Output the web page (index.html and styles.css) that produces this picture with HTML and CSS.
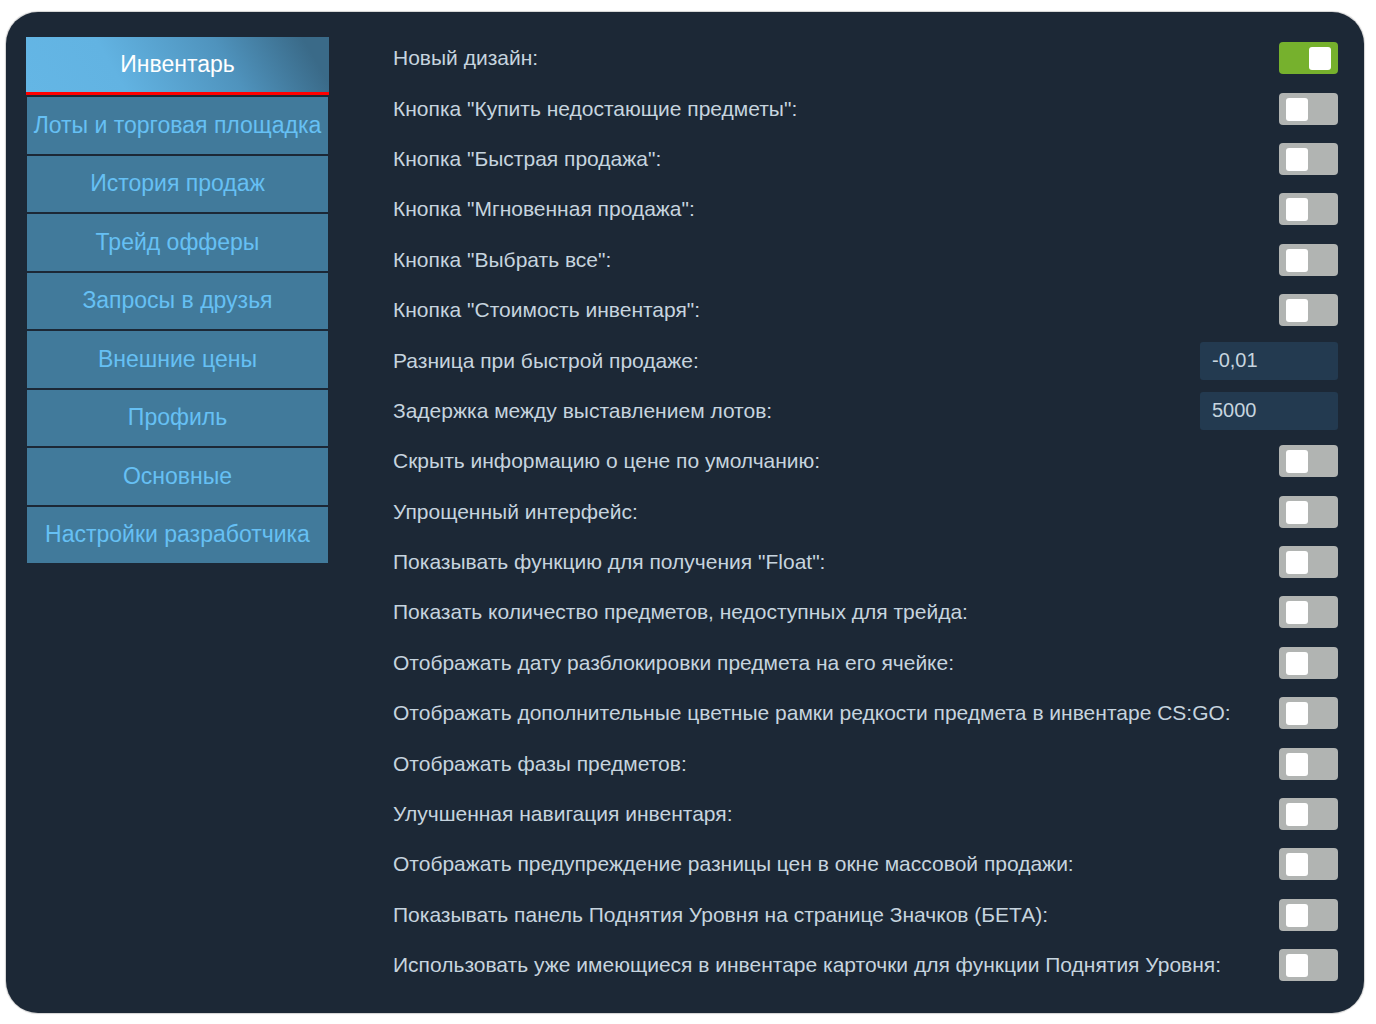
FILE: index.html
```html
<!DOCTYPE html>
<html lang="ru">
<head>
    <meta charset="UTF-8">
    <meta name="viewport" content="width=device-width, initial-scale=1.0">
    <title>Настройки</title>
    <link rel="stylesheet" href="styles.css">
</head>
<body>
    <div class="panel">
        <div class="sidebar">
            <div class="tab active">Инвентарь</div>
            <div class="tab">Лоты и торговая площадка</div>
            <div class="tab">История продаж</div>
            <div class="tab">Трейд офферы</div>
            <div class="tab">Запросы в друзья</div>
            <div class="tab">Внешние цены</div>
            <div class="tab">Профиль</div>
            <div class="tab">Основные</div>
            <div class="tab">Настройки разработчика</div>
        </div>

        <div class="options">
            <div class="row">
                <span class="label">Новый дизайн:</span>
                <span class="toggle on"><span class="knob"></span></span>
            </div>
            <div class="row">
                <span class="label">Кнопка "Купить недостающие предметы":</span>
                <span class="toggle"><span class="knob"></span></span>
            </div>
            <div class="row">
                <span class="label">Кнопка "Быстрая продажа":</span>
                <span class="toggle"><span class="knob"></span></span>
            </div>
            <div class="row">
                <span class="label">Кнопка "Мгновенная продажа":</span>
                <span class="toggle"><span class="knob"></span></span>
            </div>
            <div class="row">
                <span class="label">Кнопка "Выбрать все":</span>
                <span class="toggle"><span class="knob"></span></span>
            </div>
            <div class="row">
                <span class="label">Кнопка "Стоимость инвентаря":</span>
                <span class="toggle"><span class="knob"></span></span>
            </div>
            <div class="row">
                <span class="label">Разница при быстрой продаже:</span>
                <input class="field" type="text" value="-0,01">
            </div>
            <div class="row">
                <span class="label">Задержка между выставлением лотов:</span>
                <input class="field" type="text" value="5000">
            </div>
            <div class="row">
                <span class="label">Скрыть информацию о цене по умолчанию:</span>
                <span class="toggle"><span class="knob"></span></span>
            </div>
            <div class="row">
                <span class="label">Упрощенный интерфейс:</span>
                <span class="toggle"><span class="knob"></span></span>
            </div>
            <div class="row">
                <span class="label">Показывать функцию для получения "Float":</span>
                <span class="toggle"><span class="knob"></span></span>
            </div>
            <div class="row">
                <span class="label">Показать количество предметов, недоступных для трейда:</span>
                <span class="toggle"><span class="knob"></span></span>
            </div>
            <div class="row">
                <span class="label">Отображать дату разблокировки предмета на его ячейке:</span>
                <span class="toggle"><span class="knob"></span></span>
            </div>
            <div class="row">
                <span class="label">Отображать дополнительные цветные рамки редкости предмета в инвентаре CS:GO:</span>
                <span class="toggle"><span class="knob"></span></span>
            </div>
            <div class="row">
                <span class="label">Отображать фазы предметов:</span>
                <span class="toggle"><span class="knob"></span></span>
            </div>
            <div class="row">
                <span class="label">Улучшенная навигация инвентаря:</span>
                <span class="toggle"><span class="knob"></span></span>
            </div>
            <div class="row">
                <span class="label">Отображать предупреждение разницы цен в окне массовой продажи:</span>
                <span class="toggle"><span class="knob"></span></span>
            </div>
            <div class="row">
                <span class="label">Показывать панель Поднятия Уровня на странице Значков (БЕТА):</span>
                <span class="toggle"><span class="knob"></span></span>
            </div>
            <div class="row">
                <span class="label">Использовать уже имеющиеся в инвентаре карточки для функции Поднятия Уровня:</span>
                <span class="toggle"><span class="knob"></span></span>
            </div>
        </div>
    </div>
</body>
</html>
```

FILE: styles.css
```css
body {
    margin: 0;
    padding: 12px 12px 11px 6px;
    background-color: #ffffff;
    font-family: "Liberation Sans", Arial, sans-serif;
}
.panel {
    display: flex;
    align-items: flex-start;
    width: 1358px;
    height: 1001px;
    box-sizing: border-box;
    padding: 25px 26px 0 21px;
    background-color: #1c2836;
    border-radius: 32px;
    box-shadow: 0 0 1px 1px rgba(0, 0, 0, 0.18);
}
.sidebar {
    width: 301px;
    flex-shrink: 0;
}
.tab {
    height: 56.5px;
    margin-top: 2px;
    display: flex;
    align-items: center;
    justify-content: center;
    background-color: #417a9b;
    color: #66c0f4;
    font-size: 23px;
    white-space: nowrap;
}
.tab.active {
    height: 55px;
    margin-top: 0;
    margin-left: -1px;
    margin-right: -1px;
    border-bottom: 3px solid #ff0000;
    background: linear-gradient(240deg, #3a6a88 8%, #4f93bd 35%, #62b3e2 70%, #64b6e5 100%);
    color: #ffffff;
}
.options {
    flex: 1;
    margin-left: 65px;
    margin-top: -4px;
}
.row {
    height: 50.4px;
    display: flex;
    align-items: center;
    justify-content: space-between;
}
.label {
    color: #c6d4df;
    font-size: 21px;
    white-space: nowrap;
}
.toggle {
    position: relative;
    width: 59px;
    height: 32px;
    border-radius: 4px;
    background-color: #b1b4b2;
    flex-shrink: 0;
}
.toggle .knob {
    position: absolute;
    top: 5px;
    left: 7px;
    width: 22px;
    height: 23px;
    border-radius: 3px;
    background-color: #ffffff;
}
.toggle.on {
    background-color: #76b12d;
}
.toggle.on .knob {
    left: auto;
    right: 7px;
}
.field {
    width: 138px;
    height: 38px;
    box-sizing: border-box;
    padding: 0 12px;
    border: none;
    border-radius: 3px;
    background-color: #233a50;
    color: #c6d4df;
    font-family: "Liberation Sans", Arial, sans-serif;
    font-size: 20px;
}
```
